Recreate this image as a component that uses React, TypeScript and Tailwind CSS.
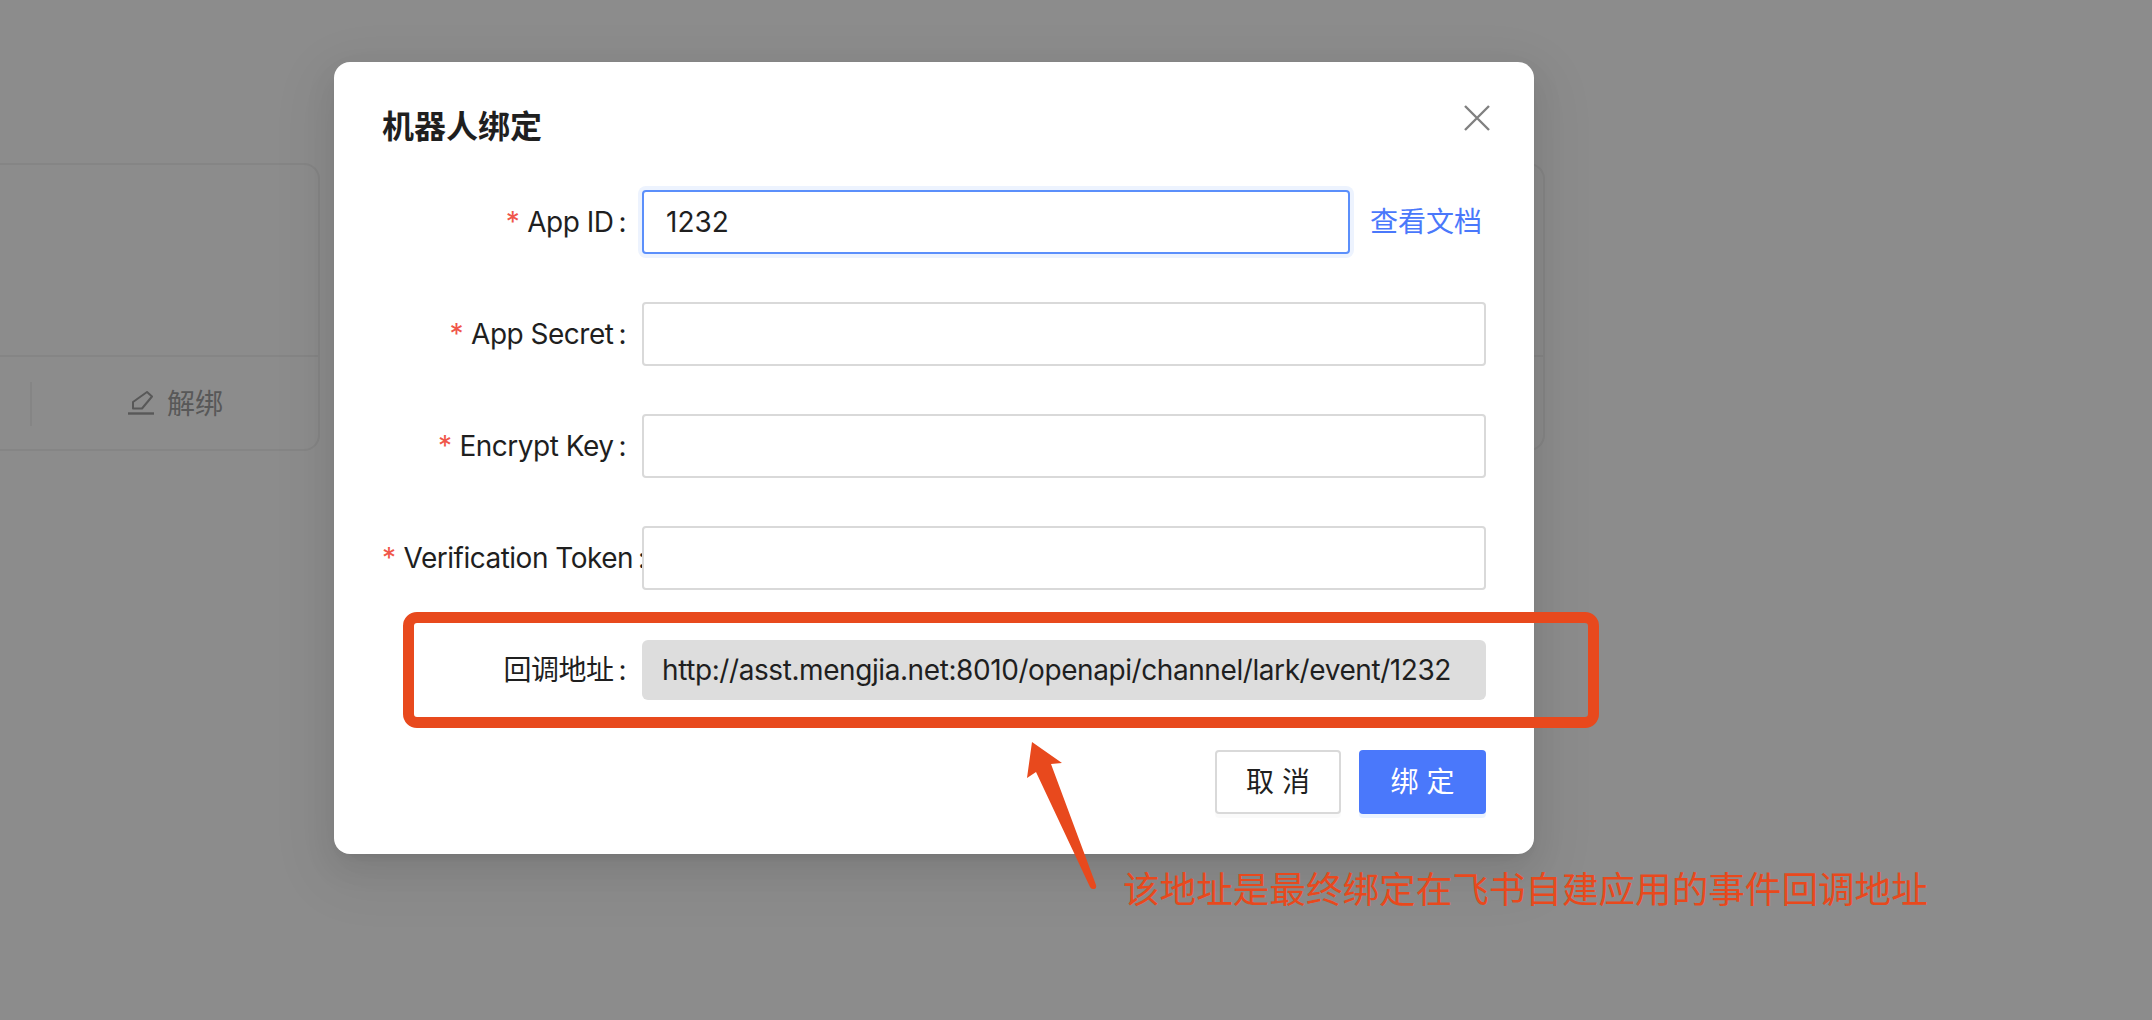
const labelClass = "w-[260px] shrink-0 whitespace-nowrap pr-4 text-right text-[28px] leading-[64px] tracking-[-0.5px] text-[#1f1f1f]";

function FormLabel({ text, required = true }: { text: string; required?: boolean }) {
  return (
    <label className={labelClass}>
      {required && <span className="mr-2 text-[#f0564a]">*</span>}
      {text}
      <span className="ml-[5px]">:</span>
    </label>
  );
}

function TextRow({ label }: { label: string }) {
  return (
    <div className="mb-12 flex h-16">
      <FormLabel text={label} />
      <input
        readOnly
        className="relative h-16 flex-1 rounded-[4px] border-2 border-[#d9d9d9] bg-white px-[22px] text-[28px] outline-none"
      />
    </div>
  );
}

function Background() {
  return (
    <div className="flex h-[1020px] w-full overflow-hidden bg-[#8c8c8c] pt-[163px] font-['Inter','Noto_Sans_CJK_SC',sans-serif]">
      <div className="ml-[-20px] flex h-[288px] w-[340px] shrink-0 flex-col rounded-[16px] border-2 border-[#858585]">
        <div className="flex-1 border-b-2 border-[#858585]" />
        <div className="flex h-[92px] items-center pt-[2px]">
          <div className="ml-[48px] h-11 w-0.5 bg-[#858585]" />
          <div className="ml-[96px] flex items-center gap-[13px] text-[28px] text-[#585858]">
            <svg width="26" height="26" viewBox="0 0 26 26" fill="none" stroke="#585858" strokeWidth="2">
              <path d="M0 22.5H26" strokeWidth="2.4" />
              <path d="M5 17.5V11L19 1L24 5.5L14 17.5Z" strokeLinejoin="round" />
            </svg>
            解绑
          </div>
        </div>
      </div>
      <div className="ml-[24px] flex h-[288px] w-[1201px] shrink-0 flex-col rounded-[16px] border-2 border-[#858585]">
        <div className="flex-1 border-b-2 border-[#858585]" />
        <div className="h-[92px]" />
      </div>
    </div>
  );
}

function Modal() {
  return (
    <div className="absolute left-[334px] top-[62px] w-[1200px] rounded-[16px] bg-white px-12 pb-10 pt-10 font-['Inter','Noto_Sans_CJK_SC',sans-serif] shadow-[0_12px_32px_0_rgba(0,0,0,0.08),0_6px_12px_-8px_rgba(0,0,0,0.12),0_18px_56px_16px_rgba(0,0,0,0.05)]">
      <div className="mb-10 flex h-12 items-center justify-between">
        <h2 className="pt-[2px] text-[32px] font-bold text-[#1f1f1f]">机器人绑定</h2>
        <svg className="mr-[-4px] mt-[-16px]" width="26" height="26" viewBox="0 0 26 26" fill="none" stroke="#808080" strokeWidth="2.4">
          <path d="M1 1L25 25M25 1L1 25" />
        </svg>
      </div>

      <div className="mb-12 flex h-16">
        <FormLabel text="App ID" />
        <input
          readOnly
          value="1232"
          className="h-16 min-w-0 flex-1 rounded-[4px] border-2 border-[#5b8ffb] bg-white px-[22px] text-[28px] text-[#1f1f1f] shadow-[0_0_0_4px_#edf3fe] outline-none"
        />
        <a className="ml-5 w-[116px] text-[28px] leading-[64px] text-[#4a78fb]">查看文档</a>
      </div>

      <TextRow label="App Secret" />
      <TextRow label="Encrypt Key" />
      <TextRow label="Verification Token" />

      <div className="mb-12 flex h-16 items-center">
        <FormLabel text="回调地址" required={false} />
        <div className="h-[60px] flex-1 rounded-[6px] bg-[#dddddd] px-[20px] text-[28px] leading-[60px] tracking-[-0.42px] text-[#1f1f1f]">
          http://asst.mengjia.net:8010/openapi/channel/lark/event/1232
        </div>
      </div>

      <div className="flex justify-end gap-[18px]">
        <button className="h-16 w-[126px] rounded-[4px] border-2 border-[#d9d9d9] bg-white pl-[8px] text-[28px] tracking-[8px] text-[#1f1f1f] shadow-[0_4px_0_rgba(0,0,0,0.02)]">
          取消
        </button>
        <button className="h-16 w-[127px] rounded-[4px] bg-[#4a78fb] pl-[8px] text-[28px] tracking-[8px] text-white shadow-[0_4px_0_rgba(5,100,255,0.08)]">
          绑定
        </button>
      </div>
    </div>
  );
}

function Annotations() {
  return (
    <>
      <div className="absolute left-[403px] top-[612px] h-[116px] w-[1196px] rounded-[14px] border-[11px] border-[#e8491d]" />
      <svg className="absolute left-[1020px] top-[738px]" width="80" height="156" viewBox="1020 738 80 156" fill="#e8491d">
        <path d="M1032 742L1062 763L1051 764L1096 885Q1097 889 1093 889Q1091 889 1090 887L1036 772L1027 778Z" />
      </svg>
      <div className="absolute left-[1123px] top-[862px] whitespace-nowrap font-['Noto_Sans_CJK_SC',sans-serif] text-[36.6px] leading-[52px] text-[#e8491d]">
        该地址是最终绑定在飞书自建应用的事件回调地址
      </div>
    </>
  );
}

export default function App() {
  return (
    <div className="relative h-[1020px] w-full overflow-hidden">
      <Background />
      <Modal />
      <Annotations />
    </div>
  );
}
